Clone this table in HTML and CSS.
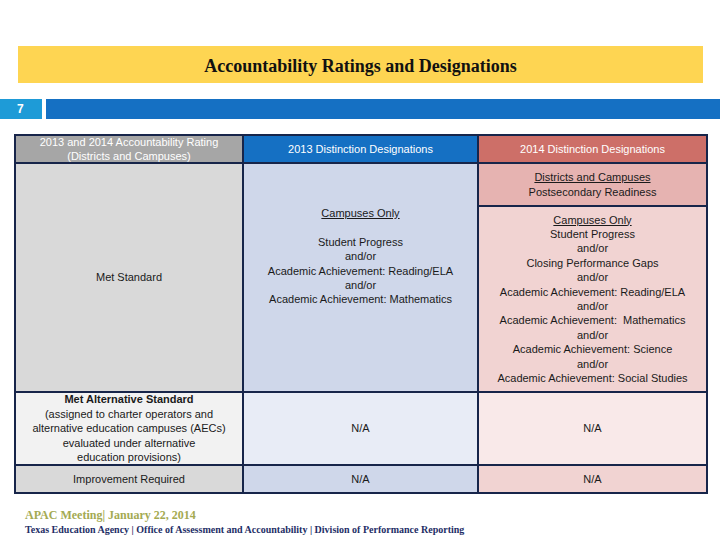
FILE: index.html
```html
<!DOCTYPE html>
<html>
<head>
<meta charset="utf-8">
<link rel="stylesheet" href="styles.css">
</head>
<body>
<div class="page">
  <header class="banner">Accountability Ratings and Designations</header>
  <div class="slidebar">
    <div class="slidenum">7</div>
    <div class="bar"></div>
  </div>
  <div class="grid">
    <div class="cell h1"><div class="txt">2013 and 2014 Accountability Rating<br>(Districts and Campuses)</div></div>
    <div class="cell h2"><div class="txt">2013 Distinction Designations</div></div>
    <div class="cell h3"><div class="txt">2014 Distinction Designations</div></div>

    <div class="cell met c1g"><div class="txt">Met Standard</div></div>
    <div class="cell met2 c2b top"><div class="txt"><u>Campuses Only</u><br><br>Student Progress<br>and/or<br>Academic Achievement: Reading/ELA<br>and/or<br>Academic Achievement: Mathematics</div></div>
    <div class="cell c3a"><div class="txt"><u>Districts and Campuses</u><br>Postsecondary Readiness</div></div>
    <div class="cell c3b"><div class="txt"><u>Campuses Only</u><br>Student Progress<br>and/or<br>Closing Performance Gaps<br>and/or<br>Academic Achievement: Reading/ELA<br>and/or<br>Academic Achievement:&nbsp; Mathematics<br>and/or<br>Academic Achievement: Science<br>and/or<br>Academic Achievement: Social Studies</div></div>

    <div class="cell r3c1"><div class="txt"><b class="strong">Met Alternative Standard</b><br>(assigned to charter operators and<br>alternative education campuses (AECs)<br>evaluated under alternative<br>education provisions)</div></div>
    <div class="cell r3c2"><div class="txt">N/A</div></div>
    <div class="cell r3c3"><div class="txt">N/A</div></div>

    <div class="cell c1g"><div class="txt">Improvement Required</div></div>
    <div class="cell c2b"><div class="txt">N/A</div></div>
    <div class="cell c3b"><div class="txt">N/A</div></div>
  </div>
  <footer class="foot">
    <div class="meeting">APAC Meeting| January 22, 2014</div>
    <div class="agency">Texas Education Agency | Office of Assessment and Accountability | Division of Performance Reporting</div>
  </footer>
</div>
</body>
</html>
```

FILE: styles.css
```css
html, body {
  margin: 0;
  padding: 0;
  background: #ffffff;
}
.page {
  width: 720px;
  height: 540px;
  overflow: hidden;
  padding-top: 46px;
  box-sizing: border-box;
}
.banner {
  margin-left: 18px;
  width: 685px;
  height: 37px;
  box-sizing: border-box;
  padding-top: 3px;
  background: #fed552;
  font-family: "Liberation Serif", serif;
  font-weight: bold;
  font-size: 18px;
  color: #111111;
  display: flex;
  align-items: center;
  justify-content: center;
}
.slidebar {
  margin-top: 16px;
  height: 20px;
  display: flex;
  gap: 4px;
}
.slidenum {
  width: 42px;
  background: #1e9bd7;
  color: #ffffff;
  font-family: "Liberation Sans", sans-serif;
  font-weight: bold;
  font-size: 12px;
  display: flex;
  align-items: center;
  padding-left: 17px;
  box-sizing: border-box;
}
.bar {
  flex: 1;
  background: #1570c3;
}
.grid {
  margin-top: 15px;
  margin-left: 14px;
  width: 694px;
  box-sizing: border-box;
  padding: 2px;
  background: #17254a;
  display: grid;
  grid-template-columns: 226px 233px 227px;
  grid-template-rows: 26px 41px 184px 71px 26px;
  gap: 2px;
  font-family: "Liberation Sans", sans-serif;
  font-size: 11px;
  line-height: 14.4px;
  color: #1a1a1a;
}
.cell {
  display: flex;
  align-items: center;
  justify-content: center;
  text-align: center;
  white-space: nowrap;
  overflow: hidden;
}
.h1 { background: #a6a6a6; color: #ffffff; line-height: 14px; }
.h2 { background: #1570c3; color: #ffffff; }
.h3 { background: #cd6f68; color: #ffffff; }
.c1g { background: #d9d9d9; }
.c2b { background: #cfd7ea; }
.met { grid-row: span 2; }
.met2 { grid-row: span 2; }
.top { align-items: flex-start; padding-top: 42px; }
.c3a { background: #e6b3b1; }
.c3b { background: #f1d3d2; }
.r3c1 { background: #f2f2f2; }
.r3c2 { background: #e8ecf6; }
.r3c3 { background: #f9e9e9; }
.strong { font-weight: bold; }
.foot {
  padding-left: 25px;
  margin-top: 14px;
  font-family: "Liberation Serif", serif;
  font-weight: bold;
}
.meeting {
  color: #a4aa52;
  font-size: 12px;
  line-height: 14px;
}
.agency {
  color: #1e2e66;
  font-size: 10px;
  line-height: 15px;
}
```
